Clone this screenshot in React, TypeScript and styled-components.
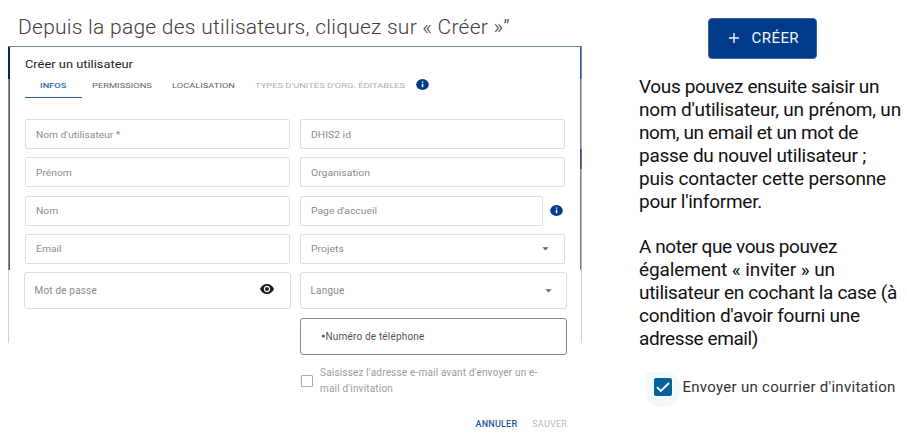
import React from "react";
import styled, { createGlobalStyle } from "styled-components";

const GlobalStyle = createGlobalStyle`
  * { box-sizing: border-box; }
  body { margin: 0; background: #fff; font-family: Roboto, "Liberation Sans", sans-serif; }
  p, h1, h2 { margin: 0; }
`;

const Page = styled.main`
  display: flex;
  width: 907px;
  height: 438px;
  overflow: hidden;
  background: #fff;
`;

const FormSide = styled.section`
  width: 574px;
  margin-left: 8px;
  padding-top: 15px;
  flex: none;
`;

const Headline = styled.h1`
  height: 31px;
  padding-left: 10px;
  font-size: 21px;
  line-height: 24px;
  font-weight: 300;
  letter-spacing: 0.26px;
  color: #3e3e3e;
  white-space: nowrap;
`;

/* White dialog with the remains of the darkened page showing along its edges. */
const Dialog = styled.div`
  height: 392px;
  padding: 10px 15px 0 16px;
  background:
    linear-gradient(#7083a5, #7083a5) 0 0 / 574px 1px no-repeat,
    linear-gradient(90deg, #14284f 1px, #0b1f4a 1px) 0 0 / 2px 33px no-repeat,
    linear-gradient(90deg, #8d8d8d 1px, #5d5d5d 1px) 0 33px / 2px 191px no-repeat,
    linear-gradient(#d2d2d2, #d2d2d2) 0 224px / 1px 73px no-repeat,
    linear-gradient(90deg, #35507f 1px, #7f91b0 1px) 100% 0 / 2px 33px no-repeat,
    linear-gradient(90deg, #35507f 1px, #64779a 1px) 100% 103px / 2px 20px no-repeat,
    linear-gradient(90deg, #808080 1px, #b5b5b5 1px) 100% 33px / 2px 191px no-repeat,
    linear-gradient(#d2d2d2, #d2d2d2) 100% 224px / 1px 73px no-repeat;
`;

const Stretch = styled.span<{ $x: number }>`
  display: inline-block;
  white-space: nowrap;
  transform: scaleX(${(p) => p.$x});
  transform-origin: 0 50%;
`;

const DialogTitle = styled.h2`
  height: 16px;
  padding-left: 1px;
  font-size: 11px;
  line-height: 17px;
  font-weight: 400;
  color: #222;
`;

const Tabs = styled.nav`
  display: flex;
  height: 26px;
  margin: 0 0 21px 1px;
  padding-top: 5px;
`;

const Tab = styled.div<{ $width: number; $inset?: number; $tone?: "active" | "disabled" }>`
  width: ${(p) => p.$width}px;
  height: 21px;
  padding-left: ${(p) => p.$inset ?? 0}px;
  font-size: 8px;
  line-height: 18px;
  font-weight: ${(p) => (p.$tone === "active" ? 500 : 400)};
  color: ${(p) => (p.$tone === "active" ? "#2f62ac" : p.$tone === "disabled" ? "#b0b0b0" : "#666")};
  border-bottom: 1px solid ${(p) => (p.$tone === "active" ? "#2f5c9e" : "transparent")};
`;

const TabGap = styled.div<{ $width: number }>`
  width: ${(p) => p.$width}px;
`;

const Fields = styled.div`
  display: flex;
  gap: 9px;
`;

const Column = styled.div<{ $width: number }>`
  display: flex;
  flex-direction: column;
  width: ${(p) => p.$width}px;
  flex: none;
`;

const Row = styled.div<{ $left?: number; $right?: number }>`
  display: flex;
  align-items: center;
  height: 30px;
  margin: 0 ${(p) => p.$right ?? 2}px 8.25px ${(p) => p.$left ?? 0}px;
`;

const SmallField = styled.div`
  display: flex;
  align-items: center;
  justify-content: space-between;
  flex: 1;
  height: 30px;
  padding: 1px 15px 0 10px;
  border: 1px solid #dedede;
  border-radius: 2px;
  font-size: 9px;
  color: #8c8c8c;
`;

const LargeField = styled.div<{ $dark?: boolean }>`
  display: flex;
  align-items: center;
  justify-content: space-between;
  height: 37px;
  padding: 0 ${(p) => (p.$dark ? 15 : 14)}px 0 ${(p) => (p.$dark ? 19.5 : 9.5)}px;
  border: 1px solid ${(p) => (p.$dark ? "#858585" : "#dedede")};
  border-radius: 3px;
  font-size: 10px;
  letter-spacing: 0.18px;
  color: ${(p) => (p.$dark ? "#555" : "#8c8c8c")};
`;

const Spacer = styled.div<{ $height: number }>`
  height: ${(p) => p.$height}px;
  flex: none;
`;

const InviteHint = styled.div`
  display: flex;
  align-items: center;
  height: 32px;
  margin-top: 10px;
  padding-left: 1px;
  gap: 7px;
`;

const EmptyBox = styled.span`
  width: 12px;
  height: 12px;
  border: 1px solid #aaa;
  border-radius: 1px;
`;

const HintText = styled.p`
  font-size: 10px;
  line-height: 15.6px;
  letter-spacing: 0.19px;
  color: #9b9b9b;
  white-space: nowrap;
`;

const Actions = styled.div`
  display: flex;
  justify-content: flex-end;
  gap: 15px;
  margin-top: 19px;
  font-size: 9px;
  line-height: 16px;
`;

const Action = styled.span<{ $primary?: boolean }>`
  letter-spacing: 0.22px;
  font-weight: ${(p) => (p.$primary ? 500 : 400)};
  color: ${(p) => (p.$primary ? "#2357a3" : "#bababa")};
`;

const Aside = styled.aside`
  width: 268px;
  margin-left: 57px;
  padding-top: 18px;
  flex: none;
`;

const CreateButton = styled.div`
  display: flex;
  align-items: center;
  width: 109px;
  height: 41px;
  margin-left: 69px;
  padding: 0 0 1px 20px;
  gap: 12.5px;
  border: 1px solid #3a64a0;
  border-radius: 4px;
  background: #023b8a;
  color: #f2f5fa;
  font-size: 15px;
  letter-spacing: 0.45px;
`;

const Guide = styled.div`
  margin: 16px 0 0 0;
  font-size: 19px;
  line-height: 23px;
  color: #111;
`;

const Line = styled.p<{ $track: number }>`
  letter-spacing: ${(p) => p.$track}px;
  white-space: nowrap;
`;

const InviteRow = styled.div`
  display: flex;
  align-items: center;
  height: 35px;
  margin: 22px 0 0 7px;
`;

const Halo = styled.span`
  display: flex;
  align-items: center;
  justify-content: center;
  width: 35px;
  height: 35px;
  padding: 0 2px 5px 0;
  border-radius: 4px 16px 18px 14px;
  background: #f3f8fc;
`;

const InviteLabel = styled.span`
  margin: 0 0 5px 1.5px;
  font-size: 15px;
  letter-spacing: 0.28px;
  color: #333;
  white-space: nowrap;
`;

const InfoIcon = () => (
  <svg width="13" height="11" viewBox="0 0 26 22">
    <ellipse cx="13" cy="11" rx="12.6" ry="10.8" fill="#023b8a" />
    <rect x="11.6" y="5" width="3" height="2.5" fill="#fff" />
    <rect x="11.6" y="9.5" width="3" height="7" fill="#fff" />
  </svg>
);

const Caret = () => (
  <svg width="7" height="4" viewBox="0 0 7 4">
    <path d="M0.4 0.3H6.6L3.5 3.5Z" fill="#666" />
  </svg>
);

const EyeIcon = () => (
  <svg width="14" height="10" viewBox="1 4.5 22 15" preserveAspectRatio="none">
    <path
      fill="#1c1c1c"
      d="M12 4.5C7 4.5 2.73 7.61 1 12c1.73 4.39 6 7.5 11 7.5s9.27-3.11 11-7.5c-1.73-4.39-6-7.5-11-7.5zM12 17c-2.76 0-5-2.24-5-5s2.24-5 5-5 5 2.24 5 5-2.24 5-5 5zm0-8c-1.66 0-3 1.34-3 3s1.34 3 3 3 3-1.34 3-3-1.34-3-3-3z"
    />
  </svg>
);

const EyeSlot = styled.span`
  display: flex;
  margin: 0 2px 3px 0;
`;

const IconSlot = styled.span`
  display: flex;
  margin: 0 2px 0 7px;
`;

const TabIconSlot = styled.span`
  display: flex;
  height: 11px;
  margin-top: 2px;
`;

const leftFields: [string, number][] = [
  ["Nom d'utilisateur *", 1.135],
  ["Prénom", 1.14],
  ["Nom", 1.14],
  ["Email", 1.15],
];

const guideLines: [string, number][] = [
  ["Vous pouvez ensuite saisir un", -0.36],
  ["nom d'utilisateur, un prénom, un", -0.19],
  ["nom, un email et un mot de", -0.39],
  ["passe du nouvel utilisateur ;", -0.25],
  ["puis contacter cette personne", -0.16],
  ["pour l'informer.", -0.26],
];

const noteLines: [string, number][] = [
  ["A noter que vous pouvez", -0.41],
  ["également « inviter » un", -0.11],
  ["utilisateur en cochant la case (à", -0.31],
  ["condition d'avoir fourni une", -0.26],
  ["adresse email)", -0.41],
];

export default function App() {
  return (
    <>
      <GlobalStyle />
      <Page>
        <FormSide>
          <Headline>Depuis la page des utilisateurs, cliquez sur « Créer »”</Headline>
          <Dialog>
            <DialogTitle>
              <Stretch $x={1.169}>Créer un utilisateur</Stretch>
            </DialogTitle>
            <Tabs>
              <Tab $width={57} $inset={15} $tone="active">
                <Stretch $x={1.16}>INFOS</Stretch>
              </Tab>
              <TabGap $width={10} />
              <Tab $width={79.5}>
                <Stretch $x={1.167}>PERMISSIONS</Stretch>
              </Tab>
              <Tab $width={83.5}>
                <Stretch $x={1.165}>LOCALISATION</Stretch>
              </Tab>
              <Tab $width={161} $tone="disabled">
                <Stretch $x={1.169}>TYPES D'UNITÉS D'ORG. ÉDITABLES</Stretch>
              </Tab>
              <TabIconSlot>
                <InfoIcon />
              </TabIconSlot>
            </Tabs>
            <Fields>
              <Column $width={267}>
                {leftFields.map(([label, x]) => (
                  <Row key={label} $left={1} $right={1}>
                    <SmallField>
                      <Stretch $x={x}>{label}</Stretch>
                    </SmallField>
                  </Row>
                ))}
                <LargeField>
                  Mot de passe
                  <EyeSlot>
                    <EyeIcon />
                  </EyeSlot>
                </LargeField>
              </Column>
              <Column $width={267}>
                <Row>
                  <SmallField>
                    <Stretch $x={1.153}>DHIS2 id</Stretch>
                  </SmallField>
                </Row>
                <Row>
                  <SmallField>
                    <Stretch $x={1.156}>Organisation</Stretch>
                  </SmallField>
                </Row>
                <Row>
                  <SmallField>
                    <Stretch $x={1.149}>Page d'accueil</Stretch>
                  </SmallField>
                  <IconSlot>
                    <InfoIcon />
                  </IconSlot>
                </Row>
                <Row>
                  <SmallField>
                    <Stretch $x={1.16}>Projets</Stretch>
                    <Caret />
                  </SmallField>
                </Row>
                <LargeField>
                  Langue
                  <Caret />
                </LargeField>
                <Spacer $height={9} />
                <LargeField $dark>
                  <span>
                    <svg width="5" height="9" viewBox="0 0 5 9">
                      <circle cx="2.4" cy="5" r="1.5" fill="#555" />
                    </svg>
                    Numéro de téléphone
                  </span>
                </LargeField>
                <InviteHint>
                  <EmptyBox />
                  <HintText>
                    Saisissez l'adresse e-mail avant d'envoyer un e-
                    <br />
                    mail d'invitation
                  </HintText>
                </InviteHint>
                <Actions>
                  <Action $primary>ANNULER</Action>
                  <Action>SAUVER</Action>
                </Actions>
              </Column>
            </Fields>
          </Dialog>
        </FormSide>
        <Aside>
          <CreateButton>
            <svg width="10" height="10" viewBox="0 0 10 10">
              <path d="M5 0V10M0 5H10" stroke="#f2f5fa" strokeWidth="1.4" />
            </svg>
            CRÉER
          </CreateButton>
          <Guide>
            {guideLines.map(([text, track]) => (
              <Line key={text} $track={track}>
                {text}
              </Line>
            ))}
            <Spacer $height={22} />
            {noteLines.map(([text, track]) => (
              <Line key={text} $track={track}>
                {text}
              </Line>
            ))}
          </Guide>
          <InviteRow>
            <Halo>
              <svg width="18" height="18" viewBox="0 0 18 18">
                <rect width="18" height="18" rx="2" fill="#06639a" />
                <path d="M3 9.2L6.8 13L15 5" fill="none" stroke="#fff" strokeWidth="1.9" />
              </svg>
            </Halo>
            <InviteLabel>Envoyer un courrier d'invitation</InviteLabel>
          </InviteRow>
        </Aside>
      </Page>
    </>
  );
}
